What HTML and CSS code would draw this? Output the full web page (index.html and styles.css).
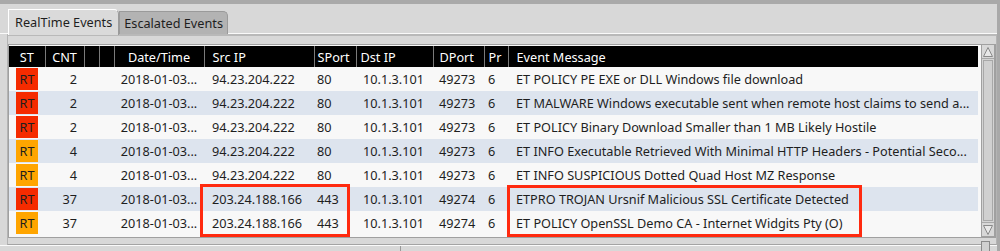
FILE: index.html
```html
<!DOCTYPE html>
<html lang="en">
<head>
    <meta charset="UTF-8">
    <title>Events</title>
    <link rel="stylesheet" href="styles.css">
</head>
<body>

<div class="window">
    <div class="tabs">
        <div class="tab active">RealTime Events</div>
        <div class="tab">Escalated Events</div>
    </div>

    <div class="pane">
        <div class="list">
            <table class="events">
                <colgroup>
                    <col style="width:36px"><col style="width:39px"><col style="width:15px"><col style="width:15px">
                    <col style="width:90px"><col style="width:110px"><col style="width:42px"><col style="width:77px">
                    <col style="width:51px"><col style="width:24px"><col>
                </colgroup>
                <thead>
                    <tr>
                        <th class="c">ST</th>
                        <th class="c">CNT</th>
                        <th></th>
                        <th></th>
                        <th class="c">Date/Time</th>
                        <th class="src">Src IP</th>
                        <th class="sport">SPort</th>
                        <th class="dst-h">Dst IP</th>
                        <th class="dport">DPort</th>
                        <th class="pr">Pr</th>
                        <th class="msg">Event Message</th>
                    </tr>
                </thead>
                <tbody>
                    <tr>
                        <td class="c"><span class="badge red">RT</span></td>
                        <td class="cnt">2</td><td></td><td></td>
                        <td class="c">2018-01-03...</td>
                        <td class="src">94.23.204.222</td>
                        <td class="sport">80</td>
                        <td class="dst">10.1.3.101</td>
                        <td class="dport">49273</td>
                        <td class="pr">6</td>
                        <td class="msg">ET POLICY PE EXE or DLL Windows file download</td>
                    </tr>
                    <tr>
                        <td class="c"><span class="badge red">RT</span></td>
                        <td class="cnt">2</td><td></td><td></td>
                        <td class="c">2018-01-03...</td>
                        <td class="src">94.23.204.222</td>
                        <td class="sport">80</td>
                        <td class="dst">10.1.3.101</td>
                        <td class="dport">49273</td>
                        <td class="pr">6</td>
                        <td class="msg">ET MALWARE Windows executable sent when remote host claims to send a...</td>
                    </tr>
                    <tr>
                        <td class="c"><span class="badge red">RT</span></td>
                        <td class="cnt">2</td><td></td><td></td>
                        <td class="c">2018-01-03...</td>
                        <td class="src">94.23.204.222</td>
                        <td class="sport">80</td>
                        <td class="dst">10.1.3.101</td>
                        <td class="dport">49273</td>
                        <td class="pr">6</td>
                        <td class="msg">ET POLICY Binary Download Smaller than 1 MB Likely Hostile</td>
                    </tr>
                    <tr>
                        <td class="c"><span class="badge orange">RT</span></td>
                        <td class="cnt">4</td><td></td><td></td>
                        <td class="c">2018-01-03...</td>
                        <td class="src">94.23.204.222</td>
                        <td class="sport">80</td>
                        <td class="dst">10.1.3.101</td>
                        <td class="dport">49273</td>
                        <td class="pr">6</td>
                        <td class="msg">ET INFO Executable Retrieved With Minimal HTTP Headers - Potential Seco...</td>
                    </tr>
                    <tr>
                        <td class="c"><span class="badge orange">RT</span></td>
                        <td class="cnt">4</td><td></td><td></td>
                        <td class="c">2018-01-03...</td>
                        <td class="src">94.23.204.222</td>
                        <td class="sport">80</td>
                        <td class="dst">10.1.3.101</td>
                        <td class="dport">49273</td>
                        <td class="pr">6</td>
                        <td class="msg">ET INFO SUSPICIOUS Dotted Quad Host MZ Response</td>
                    </tr>
                    <tr>
                        <td class="c"><span class="badge red">RT</span></td>
                        <td class="cnt">37</td><td></td><td></td>
                        <td class="c">2018-01-03...</td>
                        <td class="src">203.24.188.166</td>
                        <td class="sport">443</td>
                        <td class="dst">10.1.3.101</td>
                        <td class="dport">49274</td>
                        <td class="pr">6</td>
                        <td class="msg">ETPRO TROJAN Ursnif Malicious SSL Certificate Detected</td>
                    </tr>
                    <tr>
                        <td class="c"><span class="badge orange">RT</span></td>
                        <td class="cnt">37</td><td></td><td></td>
                        <td class="c">2018-01-03...</td>
                        <td class="src">203.24.188.166</td>
                        <td class="sport">443</td>
                        <td class="dst">10.1.3.101</td>
                        <td class="dport">49274</td>
                        <td class="pr">6</td>
                        <td class="msg">ET POLICY OpenSSL Demo CA - Internet Widgits Pty (O)</td>
                    </tr>
                </tbody>
            </table>

            <div class="scrollbar">
                <div class="arrow">
                    <svg width="12" height="12" viewBox="0 0 12 12"><path d="M1.5 10.5 L6 1.5 L10.5 10.5 Z" fill="#e8e8e8" stroke="#8a8a8a" stroke-width="1"/></svg>
                </div>
                <div class="thumb"></div>
                <div class="arrow">
                    <svg width="12" height="12" viewBox="0 0 12 12"><path d="M1.5 1.5 L6 10.5 L10.5 1.5 Z" fill="#e8e8e8" stroke="#8a8a8a" stroke-width="1"/></svg>
                </div>
            </div>

            <!-- annotation boxes -->
            <div class="mark mark-src"></div>
            <div class="mark mark-msg"></div>
        </div>
    </div>

    <div class="statusbar">
        <div class="status-cell first"></div>
        <div class="status-cell"></div>
        <div class="grip"></div>
    </div>
</div>

</body>
</html>
```

FILE: styles.css
```css
body {
    margin: 0;
    font-family: 'Noto Sans', 'Open Sans', sans-serif;
    font-size: 12.7px;
    color: #1e1e1e;
    background-color: #a9a9a9;
}
.window {
    width: 997px;
    height: 247px;
    border-top: 4px solid #a9a9a9;
    border-right: 3px solid #a9a9a9;
    background-color: #d8d8d8;
    display: flex;
    flex-direction: column;
    overflow: hidden;
}

/* Tabs */
.tabs {
    display: flex;
    padding: 5px 0 0 8px;
    height: 24px;
    border-bottom: 1px solid #fafafa;
}
.tab {
    height: 22px;
    line-height: 22px;
    padding: 0 4px;
    background-color: #b3b3b3;
    border: 1px solid #9a9a9a;
    border-bottom: none;
    border-top-right-radius: 5px;
    margin-top: 2px;
    color: #1e1e1e;
    white-space: nowrap;
}
.tab.active {
    position: relative;
    background-color: #dadada;
    border-color: #ffffff #9a9a9a #9a9a9a #ffffff;
    margin-top: 0;
    height: 25px;
    line-height: 24px;
    margin-bottom: -1px;
    padding: 0 6px;
}

/* Main pane */
.pane {
    margin-left: 7px;
    border-top: 2px solid #b9b9b9;
    border-left: 1px solid #b4b4b4;
    border-right: 1px solid #b4b4b4;
    border-bottom: 1px solid #a4a4a4;
    padding-top: 8px;
    padding-bottom: 6px;
}
.list {
    position: relative;
    display: flex;
    background-color: #f8f8f8;
    border: 1px solid #a0a0a0;
    height: 191px;
    padding-top: 1px;
}
.events {
    width: 969px;
    border-collapse: collapse;
    table-layout: fixed;
    align-self: flex-start;
}
.events th {
    background-color: #000000;
    color: #ffffff;
    font-weight: normal;
    height: 21px;
    padding: 0;
    text-align: left;
    border-left: 1px solid #7a7a7a;
    white-space: nowrap;
    overflow: hidden;
}
.events th:first-child {
    border-left: none;
}
.events td {
    height: 24px;
    padding: 0;
    white-space: nowrap;
    overflow: hidden;
}
.events tbody tr:nth-child(even) td {
    background-color: #dde4ee;
}
.events .c { text-align: center; }
.events .cnt { text-align: right; padding-right: 7px; }
.events .src { padding-left: 8px; }
.events .sport { padding-left: 3px; }
.events .dst-h { padding-left: 4px; }
.events .dst { padding-left: 7px; }
.events .dport { padding-left: 6px; }
.events .pr { padding-left: 4px; }
.events .msg { padding-left: 8px; }

.badge {
    display: inline-block;
    width: 22px;
    height: 22px;
    line-height: 22px;
    text-align: center;
    vertical-align: middle;
    color: #1e1e1e;
}
.badge.red { background-color: #f52b00; }
.badge.orange { background-color: #ffa500; }

/* Scrollbar */
.scrollbar {
    margin-left: 3px;
    margin-top: -2px;
    width: 12px;
    display: flex;
    flex-direction: column;
    border: 1px solid #a0a0a0;
    background-color: #d4d4d4;
    height: 191px;
}
.scrollbar .arrow {
    height: 13px;
    display: flex;
    justify-content: center;
    align-items: center;
    background-color: #d8d8d8;
    border-bottom: 1px solid #a8a8a8;
}
.scrollbar .arrow:last-child {
    border-bottom: none;
    border-top: 1px solid #a8a8a8;
}
.scrollbar .thumb {
    flex: 1;
    margin: 1px;
    border: 1px solid #a8a8a8;
    background-color: #d0d0d0;
}

/* Red annotation boxes */
.mark {
    position: absolute;
    border: 3px solid #ff2a0f;
    box-sizing: border-box;
}
.mark-src {
    left: 191px;
    top: 139px;
    width: 150px;
    height: 53px;
}
.mark-msg {
    left: 498px;
    top: 140px;
    width: 355px;
    height: 52px;
}

/* Bottom bar */
.statusbar {
    display: flex;
    flex: 1;
    border-top: 1px solid #fafafa;
    position: relative;
}
.status-cell.first {
    width: 400px;
    border-right: 1px solid #9a9a9a;
}
.grip {
    position: absolute;
    left: 981px;
    top: -5px;
    width: 7px;
    height: 10px;
    border: 1px solid #8a8a8a;
    background-color: #d0d0d0;
}
```
